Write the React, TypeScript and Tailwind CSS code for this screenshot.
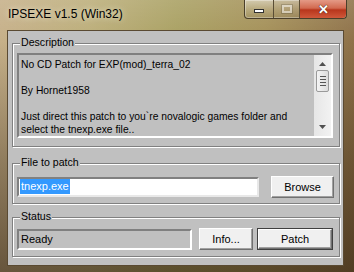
import React from "react";

const font = { fontFamily: '"Liberation Sans", Arial, sans-serif' };

function GroupBox({ label, className, children }: { label: string; className: string; children: React.ReactNode }) {
  return (
    <div className={`relative border border-[#808080] shadow-[inset_1px_1px_0_#fff,1px_1px_0_#fff] ${className}`}>
      <span className="absolute left-[7px] top-[-8px] bg-[#c0c0c0] px-[1px] text-[10.6px] leading-[13px] text-black">{label}</span>
      {children}
    </div>
  );
}

function Btn({ label, w, def }: { label: string; w: string; def?: boolean }) {
  return (
    <div className={`${w} h-[22px] ${def ? "border border-[#404040]" : ""} bg-[#f0f0f0]`}>
      <div className="flex h-full w-full items-center justify-center border border-t-white border-l-white border-b-[#707070] border-r-[#707070] text-[11px] text-black shadow-[inset_-1px_-1px_0_#a0a0a0]">
        {label}
      </div>
    </div>
  );
}

export default function App() {
  return (
    <div
      style={font}
      className="relative h-[272px] w-[354px] overflow-hidden bg-[linear-gradient(90deg,#c6b089_0%,#bcae7a_25%,#a9a062_50%,#a49058_75%,#8f7249_100%)]"
    >
      <div className="absolute inset-0 bg-[linear-gradient(180deg,rgba(255,255,255,0.12)_0%,rgba(0,0,0,0)_15%,rgba(40,25,10,0.35)_60%,rgba(40,25,10,0.6)_100%)]" />
      <div className="relative flex h-[30px] items-start">
        <div className="ml-[8px] mt-[7px] text-[12px] leading-[15px] text-black [text-shadow:0_0_6px_rgba(255,255,240,0.8)]">IPSEXE v1.5 (Win32)</div>
        <div className="ml-auto mr-[7px] flex h-[19px] rounded-b-[4px] border border-t-0 border-[#4a3f2a] shadow-[inset_0_0_0_1px_rgba(255,255,255,0.35)]">
          <div className="flex w-[29px] items-center justify-center rounded-bl-[4px] border-r border-[#5a4d35] bg-[linear-gradient(180deg,rgba(255,255,255,0.45),rgba(255,255,255,0.15)_50%,rgba(0,0,0,0.05))]">
            <div className="mt-[3px] h-[4px] w-[10px] border border-[#303030] bg-white" />
          </div>
          <div className="flex w-[26px] items-center justify-center border-r border-[#5a4d35] bg-[linear-gradient(180deg,rgba(255,255,255,0.35),rgba(255,255,255,0.1)_50%,rgba(0,0,0,0.05))]">
            <div className="h-[8px] w-[10px] border-2 border-[rgba(255,255,255,0.5)] shadow-[0_0_0_1px_rgba(0,0,0,0.15)]" />
          </div>
          <div className="flex w-[46px] items-center justify-center rounded-br-[4px] bg-[linear-gradient(180deg,#e49a86_0%,#d26a50_45%,#b8361c_55%,#d0583a_100%)]">
            <span className="text-[13px] font-bold leading-[13px] text-white [text-shadow:0_0_1px_#402010,0_0_1px_#402010]">✕</span>
          </div>
        </div>
      </div>
      <div className="relative ml-[7px] h-[236px] w-[337px] border border-[#5a4a32] bg-[#c0c0c0] p-0">
        <div className="flex flex-col pl-[4px] pt-[12px]">
          <GroupBox label="Description" className="h-[104px] w-[328px]">
            <div className="ml-[4px] mt-[9px] flex h-[85px] w-[316px] border-2 border-t-[#808080] border-l-[#808080] border-b-white border-r-white">
              <div className="flex-1 pl-[2px] pt-[3px] text-[10.3px] leading-[13px] text-black">
                <div className="h-[13px]">No CD Patch for EXP(mod)_terra_02</div>
                <div className="h-[13px]" />
                <div className="h-[13px]">By Hornet1958</div>
                <div className="h-[13px]" />
                <div className="h-[13px]">Just direct this patch to you`re novalogic games folder and</div>
                <div className="h-[13px]">select the tnexp.exe file..</div>
              </div>
              <div className="relative flex w-[17px] flex-col items-center bg-[linear-gradient(90deg,#e6e6e6,#f2f2f2)]">
                <svg width="7" height="4" viewBox="0 0 7 4" className="mt-[7px]"><path d="M3.5 0L7 4H0z" fill="#505050" /></svg>
                <div className="mt-[4px] flex h-[22px] w-[13px] flex-col items-center justify-center gap-[2px] rounded-[2px] border border-[#9a9a9a] bg-[linear-gradient(90deg,#f4f4f4,#dcdcdc)]">
                  <div className="h-px w-[6px] bg-[#555]" />
                  <div className="h-px w-[6px] bg-[#555]" />
                  <div className="h-px w-[6px] bg-[#555]" />
                  <div className="h-px w-[6px] bg-[#555]" />
                </div>
                <svg width="7" height="4" viewBox="0 0 7 4" className="mt-auto mb-[7px]"><path d="M0 0H7L3.5 4z" fill="#505050" /></svg>
              </div>
            </div>
          </GroupBox>
          <GroupBox label="File to patch" className="mt-[16px] h-[41px] w-[328px]">
            <div className="ml-[4px] mt-[11px] flex items-center">
              <div className="flex h-[20px] w-[242px] items-center border-2 border-t-[#808080] border-l-[#808080] border-b-[#e8e8e8] border-r-[#e8e8e8] bg-white pl-[1px]">
                <span className="bg-[#3399ff] px-[1px] text-[11px] leading-[15px] text-white">tnexp.exe</span>
              </div>
              <div className="ml-[12px] mt-[1px]">
                <Btn label="Browse" w="w-[63px]" />
              </div>
            </div>
          </GroupBox>
          <GroupBox label="Status" className="mt-[13px] h-[40px] w-[328px]">
            <div className="ml-[4px] mt-[10px] flex items-center">
              <div className="flex h-[21px] w-[175px] items-center border-2 border-t-[#808080] border-l-[#808080] border-b-white border-r-white pl-[2px] text-[11px] text-black">
                Ready
              </div>
              <div className="ml-[7px]">
                <Btn label="Info..." w="w-[54px]" />
              </div>
              <div className="ml-[4px]">
                <Btn label="Patch" w="w-[76px]" def />
              </div>
            </div>
          </GroupBox>
        </div>
      </div>
    </div>
  );
}
